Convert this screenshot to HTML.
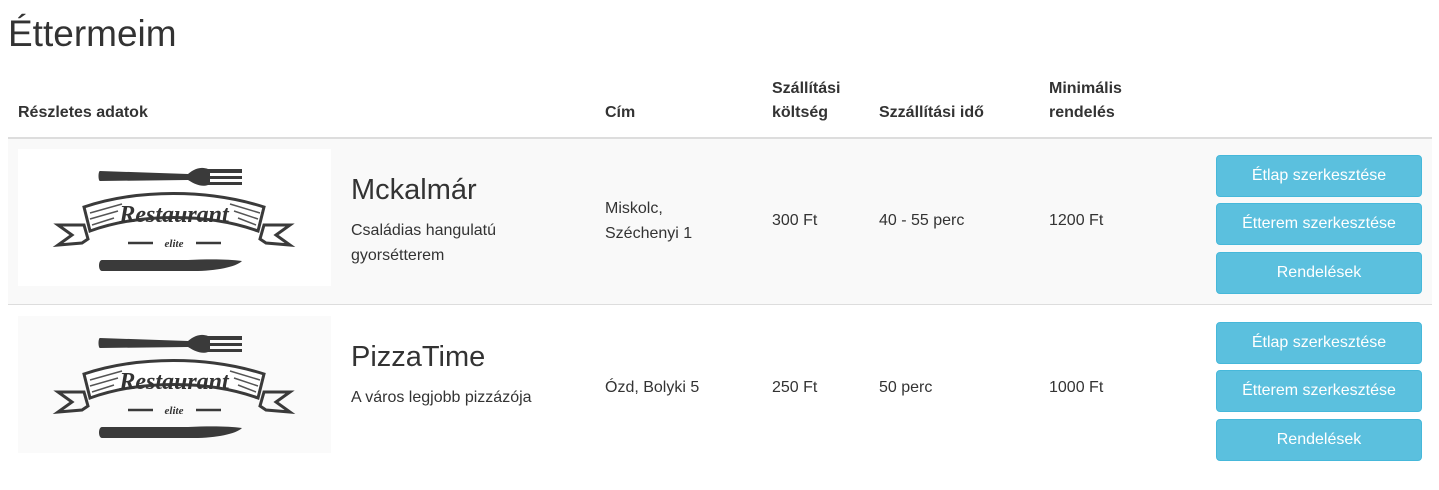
<!DOCTYPE html>
<html><head><meta charset="utf-8"><style>
*{margin:0;padding:0;box-sizing:border-box}
body{width:1439px;height:490px;background:#fff;font-family:"Liberation Sans",Arial,sans-serif;color:#333;font-size:16px;position:relative;overflow:hidden}
h1{position:absolute;left:8px;top:13px;font-size:37px;font-weight:normal;color:#333}
.th{position:absolute;font-weight:bold;font-size:16px;line-height:24px}
.row1{position:absolute;left:8px;top:137px;width:1424px;height:168px;background:#f9f9f9;border-top:2px solid #ddd;border-bottom:1px solid #ddd}
.logo{position:absolute;left:18px;width:313px;height:137px;background:#fff}
.btn{position:absolute;left:1216px;width:206px;height:42px;background:#5bc0de;border:1px solid #46b8da;border-radius:4px;color:#fff;font-size:16px;text-align:center;line-height:40px}
.t{position:absolute;font-size:16px;line-height:25px}
.name{position:absolute;font-size:29px}
</style></head><body>
<h1>Éttermeim</h1>
<div class="th" style="left:18px;top:101px">Részletes adatok</div>
<div class="th" style="left:605px;top:101px">Cím</div>
<div class="th" style="left:772px;top:77px">Szállítási<br>költség</div>
<div class="th" style="left:879px;top:101px">Szzállítási idő</div>
<div class="th" style="left:1049px;top:77px">Minimális<br>rendelés</div>
<div class="row1"></div>

<svg width="0" height="0" style="position:absolute"><defs>
<g id="lg">
<path d="M82 22 L170 25 C178 18 185 18 190 20 L224 20 L224 24 L192 24 L192 27 L224 27 L224 30 L192 30 L192 33 L224 33 L224 36 L190 36 C184 38 178 36 170 31 L82 32 C80 32 80 22 82 22Z" fill="#3a3a3a"/>
<path d="M40 76 L66 76 L70 90 L64 94 L40 96 L54 86Z" fill="none" stroke="#3a3a3a" stroke-width="3"/>
<path d="M272 76 L246 76 L242 90 L248 94 L272 96 L258 86Z" fill="none" stroke="#3a3a3a" stroke-width="3"/>
<path d="M66 58 C120 40 190 40 246 58 L240 82 C190 64 122 64 72 82Z" fill="#fff" stroke="#3a3a3a" stroke-width="3"/>
<path d="M72 64 L104 55 M72 70 L100 62 M74 76 L96 69 M212 55 L242 64 M216 62 L240 70 M220 69 L238 76" stroke="#555" stroke-width="1.5"/>
<text x="156" y="73" text-anchor="middle" font-family="Liberation Serif,serif" font-style="italic" font-weight="bold" font-size="24" fill="#333">Restaurant</text>
<path d="M110 94 L135 94 M178 94 L203 94" stroke="#3a3a3a" stroke-width="2.5"/>
<text x="156" y="98" text-anchor="middle" font-family="Liberation Serif,serif" font-style="italic" font-weight="bold" font-size="11" fill="#333">elite</text>
<path d="M84 111 L170 111 C190 110 210 110 224 112 C218 118 198 122 176 122 L84 122 C80 122 80 111 84 111Z" fill="#3a3a3a"/>
</g></defs></svg>

<div class="logo" style="top:149px"><svg width="313" height="137" viewBox="0 0 313 137"><use href="#lg"/></svg></div>
<div class="name" style="left:351px;top:174px">Mckalmár</div>
<div class="t" style="left:351px;top:218px">Családias hangulatú<br>gyorsétterem</div>
<div class="t" style="left:605px;top:196px">Miskolc,<br>Széchenyi 1</div>
<div class="t" style="left:772px;top:208px">300 Ft</div>
<div class="t" style="left:879px;top:208px">40 - 55 perc</div>
<div class="t" style="left:1049px;top:208px">1200 Ft</div>
<div class="btn" style="top:155px">Étlap szerkesztése</div>
<div class="btn" style="top:203px">Étterem szerkesztése</div>
<div class="btn" style="top:252px">Rendelések</div>

<div class="logo" style="top:316px;background:#fafafa"><svg width="313" height="137" viewBox="0 0 313 137"><use href="#lg"/></svg></div>
<div class="name" style="left:351px;top:341px">PizzaTime</div>
<div class="t" style="left:351px;top:385px">A város legjobb pizzázója</div>
<div class="t" style="left:605px;top:375px">Ózd, Bolyki 5</div>
<div class="t" style="left:772px;top:375px">250 Ft</div>
<div class="t" style="left:879px;top:375px">50 perc</div>
<div class="t" style="left:1049px;top:375px">1000 Ft</div>
<div class="btn" style="top:322px">Étlap szerkesztése</div>
<div class="btn" style="top:370px">Étterem szerkesztése</div>
<div class="btn" style="top:419px">Rendelések</div>
</body></html>
